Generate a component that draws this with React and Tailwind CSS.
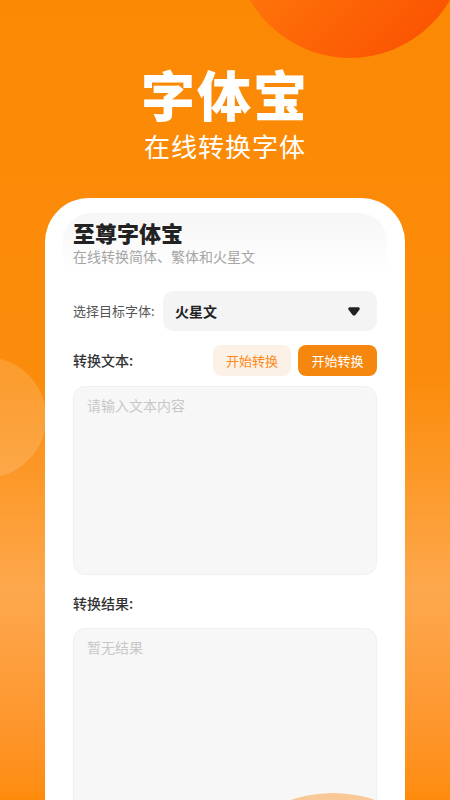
export default function App() {
  return (
    <main
      className="relative h-[800px] w-full overflow-hidden bg-gradient-to-b from-[#fb8904] via-[#fb8c0c] to-[#fe8a05]"
      style={{ fontFamily: '"Noto Sans CJK SC", "Noto Sans", sans-serif' }}
    >
      {/* background tint */}
      <div className="absolute inset-x-0 top-[380px] h-[420px] bg-gradient-to-b from-transparent via-[#fda84d] to-[#fe8c0a]" />

      {/* top right circle */}
      <div className="absolute left-[235px] top-[-172px] h-[230px] w-[230px] rounded-full bg-gradient-to-br from-[#ff8a12] to-[#fa4a00]" />

      {/* left circle */}
      <div className="absolute left-[-75px] top-[357px] h-[121px] w-[121px] rounded-full bg-white/15" />

      <header className="relative flex flex-col items-center pt-[67px] text-white">
        <h1 className="text-[54px] font-black leading-[54px] tracking-[2px]">字体宝</h1>
        <p className="mt-[11px] text-[26px] leading-[28px] tracking-[1px]">在线转换字体</p>
      </header>

      <section className="relative mx-[45px] mt-[38px] h-[620px] rounded-t-[44px] bg-white pt-[15px]">
        <div className="mx-[18px] rounded-t-[28px] bg-gradient-to-b from-[#f6f6f6] to-white px-[10px] pb-[6px] pt-[5px]">
          <h2 className="text-[22px] font-black leading-[28px] text-[#222]">至尊字体宝</h2>
          <p className="text-[14px] leading-[20px] text-[#a5a5a5]">在线转换简体、繁体和火星文</p>
        </div>

        <div className="mt-[19px] flex items-center px-[28px]">
          <span className="w-[90px] text-[13px] text-[#555]">选择目标字体:</span>
          <div className="flex h-[40px] flex-1 items-center justify-between rounded-[10px] bg-[#f4f4f4] pl-[12px] pr-[17px]">
            <span className="text-[14px] font-bold text-[#222]">火星文</span>
            <svg width="12" height="9" viewBox="0 0 12 9">
              <path
                d="M2 0.3 H10 C11.6 0.3 12.3 1.8 11.3 3 L7.4 7.9 C6.7 8.8 5.3 8.8 4.6 7.9 L0.7 3 C-0.3 1.8 0.4 0.3 2 0.3 Z"
                fill="#222"
              />
            </svg>
          </div>
        </div>

        <div className="mt-[14px] flex items-center justify-between px-[28px]">
          <span className="text-[14px] font-medium text-[#333]">转换文本:</span>
          <div className="flex gap-[7px]">
            <button className="h-[31px] w-[78px] rounded-[8px] bg-[#fbf1e6] text-[13px] text-[#fd8a1c]">开始转换</button>
            <button className="h-[31px] w-[79px] rounded-[8px] bg-[#f5870f] text-[13px] text-white">开始转换</button>
          </div>
        </div>

        <div className="mx-[28px] mt-[10px] h-[189px] rounded-[12px] border border-[#f0f0f0] bg-[#f7f7f7] px-[13px] py-[8px] text-[14px] text-[#c8c8c8]">
          请输入文本内容
        </div>

        <div className="mt-[18px] px-[28px] text-[14px] font-medium leading-[20px] text-[#333]">转换结果:</div>

        <div className="relative mx-[28px] mt-[15px] h-[200px] overflow-hidden rounded-[12px] border border-[#f0f0f0] bg-[#f7f7f7] px-[13px] py-[8px] text-[14px] text-[#c8c8c8]">
          暂无结果
          <div className="absolute left-[127px] top-[164px] h-[264px] w-[264px] rounded-full bg-[#f8c896]" />
        </div>
      </section>
    </main>
  );
}
